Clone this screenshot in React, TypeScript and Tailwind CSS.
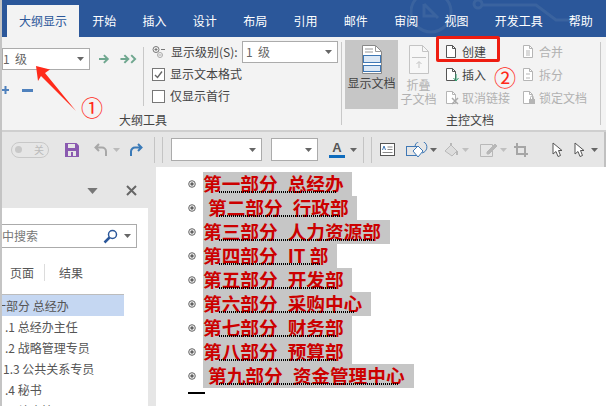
const UI = "font-['Noto_Sans_CJK_SC',sans-serif]";

const TABS = [
  { label: "开始", w: "w-[51px]" },
  { label: "插入", w: "w-[51px]" },
  { label: "设计", w: "w-[51px]" },
  { label: "布局", w: "w-[51px]" },
  { label: "引用", w: "w-[51px]" },
  { label: "邮件", w: "w-[51px]" },
  { label: "审阅", w: "w-[51px]" },
  { label: "视图", w: "w-[51px]" },
  { label: "开发工具", w: "w-[75px]" },
  { label: "帮助", w: "w-[51px]" },
];

const PARTS = [
  { a: "第一部分", b: "总经办", w: "w-[149px]", pad: "" },
  { a: "第二部分", b: "行政部", w: "w-[154px]", pad: "pl-[5px]" },
  { a: "第三部分", b: "人力资源部", w: "w-[187px]", pad: "" },
  { a: "第四部分", b: "IT 部", w: "w-[134px]", pad: "" },
  { a: "第五部分", b: "开发部", w: "w-[149px]", pad: "" },
  { a: "第六部分", b: "采购中心", w: "w-[168px]", pad: "" },
  { a: "第七部分", b: "财务部", w: "w-[149px]", pad: "" },
  { a: "第八部分", b: "预算部", w: "w-[149px]", pad: "" },
  { a: "第九部分", b: "资金管理中心", w: "w-[211px]", pad: "pl-[5px]" },
];

const NAV = [
  { text: "第一部分 总经办", cls: "-ml-[20px] bg-[#c5d7f2]" },
  { text: ".1 总经办主任", cls: "pl-[3px]" },
  { text: ".2 战略管理专员", cls: "pl-[3px]" },
  { text: "1.3 公共关系专员", cls: "pl-[1px]" },
  { text: ".4 秘书", cls: "pl-[3px]" },
  { text: ".5 综合管理员", cls: "pl-[3px]" },
];

function Caret({ color = "#666", className = "" }: { color?: string; className?: string }) {
  return (
    <svg width="7" height="4" viewBox="0 0 7 4" className={className}>
      <path d="M0 0h7L3.5 4z" fill={color} />
    </svg>
  );
}

function DocIcon({ color = "#666", children }: { color?: string; children?: React.ReactNode }) {
  return (
    <svg width="17" height="17" viewBox="0 0 17 17" fill="none" className="shrink-0">
      <path d="M3.5 2.5h6l3 3v9h-9z" fill="#fff" stroke={color} />
      <path d="M9.5 2.5v3h3" stroke={color} />
      {children}
    </svg>
  );
}

function Select({ text, w, h, pad = "pl-[3px]" }: { text?: string; w: string; h: string; pad?: string }) {
  return (
    <div className={`${w} ${h} ${pad} flex items-center justify-between border border-[#ababab] bg-white pr-[5px] text-[12px] text-[#666]`}>
      <span className="whitespace-pre">{text}</span>
      <Caret />
    </div>
  );
}

function Check({ on, label }: { on?: boolean; label: string }) {
  return (
    <div className="flex h-[22px] items-center text-[12px] text-[#444]">
      <span className="mr-[5px] flex h-[13px] w-[13px] items-center justify-center border border-[#777] bg-white">
        {on && (
          <svg width="11" height="11" viewBox="0 0 11 11" fill="none">
            <path d="M2 6l2.5 2.5L9 2.5" stroke="#666" strokeWidth="1.4" />
          </svg>
        )}
      </span>
      {label}
    </div>
  );
}

function MasterRow({ icon, label, off }: { icon: React.ReactNode; label: string; off?: boolean }) {
  return (
    <div className={`flex h-[23px] items-center text-[12px] ${off ? "text-[#b1b1b1]" : "text-[#444]"}`}>
      {icon}
      <span className="ml-[2px] w-[48px]">{label}</span>
    </div>
  );
}

function Bullet() {
  return (
    <svg width="8" height="8" viewBox="0 0 8 8" fill="none" className="shrink-0">
      <circle cx="4" cy="4" r="3.3" fill="#eee" stroke="#666" />
      <path d="M2.2 4h3.6M4 2.2v3.6" stroke="#333" />
    </svg>
  );
}

export default function App() {
  return (
    <div className={`${UI} relative flex h-[406px] w-[606px] flex-col overflow-hidden border-l-2 border-[#c4c4c4] bg-[#f3f3f3]`}>
      {/* title bar */}
      <div className="relative flex h-[37px] shrink-0 items-end bg-[#2b579a] pl-[5px]">
        <svg width="190" height="37" viewBox="0 0 190 37" fill="none" className="absolute left-[408px] top-0" stroke="#3a639f" strokeWidth="3">
          <circle cx="21" cy="12" r="20" />
          <path d="M14 4v12h12M14 4l14 14" />
          <circle cx="68" cy="4" r="4" />
          <path d="M72 5h54l20 15h22" />
        </svg>
        <div className="flex h-[32px] w-[73px] items-center justify-center bg-[#f3f3f3] text-[12px] text-[#2b579a]">大纲显示</div>
        {TABS.map((t) => (
          <div key={t.label} className={`${t.w} relative flex h-[32px] items-center justify-center text-[12px] text-white`}>
            {t.label}
          </div>
        ))}
      </div>

      {/* ribbon */}
      <div className="flex h-[95px] shrink-0 border-b-2 border-[#cfcfcf]">
        <div className="flex w-[339px] flex-col">
          <div className="flex h-[72px]">
            <div className="w-[141px] pt-[11px]">
              <div className="flex items-center">
                <Select text="1  级" w="w-[90px]" h="h-[22px]" pad="pl-0" />
                <svg width="46" height="12" viewBox="0 0 46 12" fill="none" stroke="#6fa78f" strokeWidth="2" className="ml-[8px]">
                  <path d="M1 6h8M6 2l4 4-4 4M23 6h7M27 2l4 4-4 4M34 2l4 4-4 4" />
                </svg>
              </div>
              <svg width="32" height="10" viewBox="0 0 32 10" className="mt-[15px]" fill="#4f81bd">
                <path d="M0 4h7v2H0zM2.5 1h2v8h-2zM20 4h11v3H20z" />
              </svg>
            </div>
            <div className="mt-[10px] mb-[3px] w-px bg-[#c8c8c8]" />
            <div className="ml-[8px] flex flex-col pt-[3px]">
              <div className="flex h-[23px] items-center text-[12px] text-[#444]">
                <svg width="14" height="12" viewBox="0 0 14 12" fill="none" stroke="#777" className="mr-[5px]">
                  <circle cx="4" cy="3.5" r="3" />
                  <path d="M2.5 3.5h3M4 2v3M9 3.5h4" />
                  <circle cx="8" cy="9" r="2.5" stroke="#aaa" />
                  <path d="M6.5 9h3" stroke="#aaa" />
                </svg>
                <span className="w-[71px]">显示级别(S):</span>
                <Select text="1  级" w="w-[96px]" h="h-[22px]" />
              </div>
              <Check on label="显示文本格式" />
              <Check label="仅显示首行" />
            </div>
          </div>
          <div className="flex-1 pl-[117px] pt-[3px] text-[12px] leading-[16px] text-[#444]">大纲工具</div>
        </div>

        <div className="my-[5px] w-px bg-[#c8c8c8]" />

        <div className="flex w-[258px] flex-col">
          <div className="flex h-[72px] pl-[3px] pt-[3px]">
            <div className="flex h-[69px] w-[53px] flex-col items-center bg-[#c6c6c6] pt-[5px] text-[12px] text-[#444]">
              <svg width="22" height="29" viewBox="0 0 22 29" fill="none">
                <path d="M1.5.5h13l6 6v22h-19z" fill="#fff" stroke="#888" />
                <path d="M14.5.5v6h6M4 4h8M4 7h8" stroke="#999" />
                <rect x="2.5" y="10.5" width="17" height="7" fill="#dce8f5" stroke="#3f78b5" />
                <rect x="2.5" y="20.5" width="17" height="6" fill="#dce8f5" stroke="#3f78b5" />
              </svg>
              <span className="mt-0">显示文档</span>
            </div>
            <div className="flex w-[41px] flex-col items-center pt-[5px] text-[12px] leading-[14px] text-[#b1b1b1]">
              <svg width="22" height="29" viewBox="0 0 22 29" fill="none" stroke="#c4c4c4">
                <path d="M1.5.5h13l6 6v22h-19z" fill="#f7f7f7" />
                <path d="M14.5.5v6h6M4 12.5h14M11 23v-6M8.5 19l2.5-2.5 2.5 2.5" />
              </svg>
              <span className="mt-[4px]">折叠</span>
              <span>子文档</span>
            </div>
            <div className="ml-[4px] flex flex-col">
              <MasterRow label="创建" icon={<DocIcon color="#555" />} />
              <MasterRow label="插入" icon={
                <DocIcon color="#555">
                  <path d="M13 8v7M10.5 12l2.5 3 2.5-3" stroke="#2f9e6e" />
                </DocIcon>
              } />
              <MasterRow off label="取消链接" icon={
                <DocIcon color="#b5b5b5">
                  <path d="M9 9l6 6M15 9l-6 6" stroke="#aaa" strokeWidth="1.5" />
                </DocIcon>
              } />
            </div>
            <div className="ml-[10px] flex flex-col">
              <MasterRow off label="合并" icon={<DocIcon color="#b5b5b5"><path d="M6 8h4M6 10h4M6 12h4" stroke="#b5b5b5" /></DocIcon>} />
              <MasterRow off label="拆分" icon={<DocIcon color="#b5b5b5"><path d="M6 8h4M6 12h4" stroke="#b5b5b5" /></DocIcon>} />
              <MasterRow off label="锁定文档" icon={
                <DocIcon color="#b5b5b5">
                  <rect x="9" y="10" width="6" height="5" fill="#b5b5b5" />
                  <path d="M10.5 10V8.5a1.5 1.5 0 013 0V10" stroke="#b5b5b5" />
                </DocIcon>
              } />
            </div>
          </div>
          <div className="flex-1 pl-[104px] pt-[3px] text-[12px] leading-[16px] text-[#444]">主控文档</div>
        </div>
        <div className="my-[5px] w-px bg-[#c8c8c8]" />
      </div>

      {/* quick access toolbar */}
      <div className="flex h-[35px] shrink-0 items-center border-r-2 border-[#c0c0c0] bg-[#e6e6e6] pl-[9px]">
        <div className="flex h-[16px] w-[38px] items-center justify-between rounded-full border border-[#c8c8c8] pl-[3px] pr-[4px] text-[10px] leading-none text-[#bbb]">
          <span className="h-[7px] w-[7px] rounded-full bg-[#c8c8c8]" />关
        </div>
        <svg width="14" height="14" viewBox="0 0 14 14" className="ml-[16px]">
          <path d="M0 0h11.5L14 2.5V14H0z" fill="#8a5ab0" />
          <path d="M3 1h7v4H3z" fill="#e6e6e6" />
          <path d="M3 8h8v5H3z" fill="#e6e6e6" />
          <path d="M6 9h2v4H6z" fill="#8a5ab0" />
        </svg>
        <svg width="15" height="14" viewBox="0 0 15 14" fill="none" stroke="#a8a8a8" strokeWidth="2" className="ml-[15px]">
          <path d="M5 1L1.5 4.5 5 8M2 4.5h6a4 4 0 014 4V13" />
        </svg>
        <Caret color="#bbb" className="ml-[4px]" />
        <svg width="15" height="14" viewBox="0 0 15 14" fill="none" stroke="#3a7ab8" strokeWidth="2" className="ml-[8px]">
          <path d="M10 1l3.5 3.5L10 8M13 4.500H7a4 4 0 00-4 4V13" />
        </svg>
        <div className="ml-[11px] h-[26px] w-px bg-[#c4c4c4]" />
        <div className="ml-[7px] h-[26px] w-px bg-[#c4c4c4]" />
        <div className="ml-[8px]"><Select w="w-[91px]" h="h-[23px]" /></div>
        <div className="ml-[9px]"><Select w="w-[47px]" h="h-[23px]" /></div>
        <div className="ml-[11px] flex w-[16px] flex-col items-center">
          <span className="font-['Liberation_Sans'] text-[13px] font-bold leading-[12px] text-[#555]">A</span>
          <span className="mt-px h-[3px] w-[16px] bg-[#0f6cbd]" />
        </div>
        <Caret className="ml-[5px]" />
        <div className="ml-[6px] h-[26px] w-px bg-[#c4c4c4]" />
        <div className="ml-[7px] h-[26px] w-px bg-[#c4c4c4]" />
        <svg width="15" height="13" viewBox="0 0 15 13" fill="none" className="ml-[8px]">
          <rect x=".5" y=".5" width="14" height="12" fill="#fff" stroke="#555" />
          <path d="M7.5 4h5M7.5 6.5h5M2.5 9.5h10" stroke="#888" />
          <path d="M2.5 7l1.5-4 1.5 4" stroke="#3f78b5" />
        </svg>
        <svg width="22" height="16" viewBox="0 0 22 16" fill="none" stroke="#3f78b5" className="ml-[11px]">
          <rect x=".5" y="4.5" width="10" height="9" />
          <path d="M9 4a6 6 0 1 1 7 7" />
          <path d="M12 4l5 5-5 6-5-6z" fill="#fff" />
        </svg>
        <Caret className="ml-[2px]" />
        <svg width="16" height="14" viewBox="0 0 16 14" fill="none" stroke="#b8b8b8" className="ml-[7px]">
          <path d="M1 8l6-6 6 6-5 5z" fill="#ddd" />
          <path d="M7 2V0M13 8v4" strokeWidth="2" />
        </svg>
        <Caret color="#c0c0c0" className="ml-[2px]" />
        <svg width="18" height="14" viewBox="0 0 18 14" fill="none" stroke="#b8b8b8" className="ml-[11px]">
          <path d="M.5 1.5h12v12H.5z" />
          <path d="M7 9l8-8 2 2-8 8H7z" fill="#b8b8b8" />
        </svg>
        <Caret color="#c0c0c0" className="ml-[2px]" />
        <svg width="14" height="14" viewBox="0 0 14 14" fill="none" stroke="#a6a6a6" strokeWidth="2" className="ml-[7px]">
          <path d="M0 4h11v10M3 0v11h11" />
        </svg>
        <svg width="11" height="16" viewBox="0 0 11 16" className="ml-[24px]">
          <path d="M1 1v11l3-2.5 2 5 2.5-1-2-5H10z" fill="#fff" stroke="#555" />
        </svg>
        <svg width="11" height="16" viewBox="0 0 11 16" className="ml-[11px]">
          <path d="M1 1v11l3-2.5 2 5 2.5-1-2-5H10z" fill="#fff" stroke="#555" />
        </svg>
        <Caret className="ml-[6px]" />
      </div>

      {/* navigation pane + document */}
      <div className="flex min-h-0 flex-1">
        <div className="flex w-[154px] shrink-0 flex-col bg-[#e6e6e6]">
          <div className="flex h-[41px] shrink-0 items-center justify-end pr-[19px] pt-[6px]">
            <Caret color="#777" className="mr-[30px] scale-150" />
            <svg width="11" height="11" viewBox="0 0 11 11" stroke="#666" strokeWidth="2">
              <path d="M1 1l9 9M10 1l-9 9" />
            </svg>
          </div>
          <div className="w-[146px] flex-1 overflow-hidden bg-white">
            <div className="mt-[16px] flex h-[24px] w-[135px] items-center justify-between border border-l-0 border-[#ababab] pr-[5px] text-[12px] text-[#777]">
              <span>中搜索</span>
              <span className="flex items-center gap-[6px]">
                <svg width="15" height="15" viewBox="0 0 15 15" fill="none" stroke="#2b579a">
                  <circle cx="9.5" cy="5.5" r="4" strokeWidth="1.5" />
                  <path d="M6.5 8.5L1.5 13.5" strokeWidth="2.5" />
                </svg>
                <Caret />
              </span>
            </div>
            <div className="mt-[16px] flex h-[17px] items-center text-[12px] text-[#555]">
              <span className="w-[43px] border-r border-[#dcdcdc] pl-[8px] leading-[17px]">页面</span>
              <span className="pl-[14px]">结果</span>
            </div>
            <div className="mt-[13px] w-[122px] border-t border-[#bcbcbc]">
              {NAV.map((n) => (
                <div key={n.text} className={`h-[21px] whitespace-nowrap text-[12px] leading-[21px] text-[#555] ${n.cls}`}>
                  {n.text}
                </div>
              ))}
            </div>
          </div>
        </div>

        <div className="flex-1 bg-white pl-[32px] pt-[5px]">
          {PARTS.map((p) => (
            <div key={p.a} className="flex h-[24px] items-center">
              <Bullet />
              <div className={`${p.w} ${p.pad} relative ml-[7px] flex h-[24px] shrink-0 items-center whitespace-nowrap bg-[#c6c6c6] pb-[2px] text-[18.67px] font-bold leading-[22px] text-[#cc0000]`}>
                <span>{p.a}</span>
                <span className="ml-[10px]">{p.b}</span>
                <span className="absolute bottom-[3px] left-[16px] right-[16px] h-[2px] bg-[repeating-linear-gradient(90deg,#000_0_1px,transparent_1px_2px)]" />
              </div>
            </div>
          ))}
          <div className="mt-[4px] h-[2px] w-[17px] bg-black" />
        </div>
      </div>

      {/* red annotations */}
      <svg width="50" height="50" viewBox="0 0 50 50" className="absolute left-[30px] top-[64px]">
        <path d="M4 2L18 5.5 13 9 44 47 9 12 6 17z" fill="#ff2a1a" />
      </svg>
      <span className="absolute left-[79px] top-[93px] text-[22px] leading-[26px] text-[#ff2a1a]">①</span>
      <div className="absolute left-[434px] top-[36px] h-[26px] w-[64px] rounded-[2px] border-[3px] border-[#ee1c10]" />
      <span className="absolute left-[492px] top-[63px] text-[22px] leading-[26px] text-[#ff2a1a]">②</span>
    </div>
  );
}
